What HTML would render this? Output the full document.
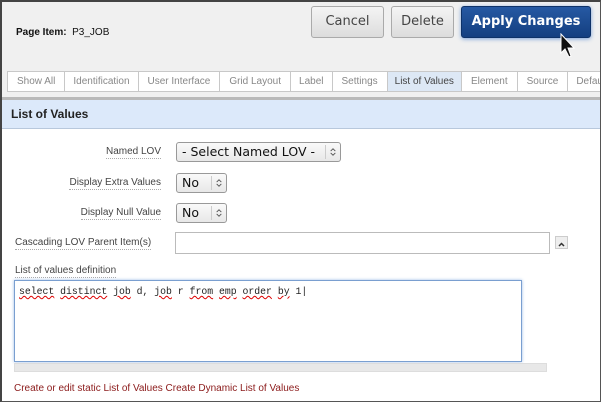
<!DOCTYPE html>
<html><head><style>
*{box-sizing:border-box;margin:0;padding:0}
body{width:602px;height:403px;overflow:hidden;background:#fff;font-family:"Liberation Sans",sans-serif;position:relative}
.frame{position:absolute;left:0;top:0;width:601px;height:402px;border:1px solid #555;border-left:2px solid #444;border-top:2px solid #444}
.hdr{position:absolute;left:2px;top:2px;width:598px;height:96px;background:#f0f0f0}
.title{position:absolute;left:16px;top:27px;font-size:10px;font-weight:bold;color:#111}
.btn{position:absolute;top:6px;height:32px;border:1px solid #aaa;border-radius:3px;background:linear-gradient(#f4f4f4,#dcdcdc);font-family:"DejaVu Sans",sans-serif;font-size:13px;color:#444;text-align:center;line-height:30px}
.apply{background:linear-gradient(#2659a3,#143f80);border-color:#0e3268;color:#fff;font-weight:bold;box-shadow:0 1px 4px #7aa0d8}
.tabwrap{position:absolute;left:7px;top:71px;width:593px;height:21px;overflow:hidden}
.tabs{display:flex;border:1px solid #c8c8c8;background:#fff;width:700px;height:21px}
.tabs div{font-size:10px;color:#888;line-height:19px;padding:0 8px;border-right:1px solid #c8c8c8;white-space:nowrap}
.tabs .on{background:#dde8f5;color:#444}
.sep{position:absolute;left:2px;top:97px;width:598px;height:3px;background:#b9b9b9}
.sec{position:absolute;left:2px;top:100px;width:598px;height:29px;background:#dce9fa;border-bottom:1px solid #b8c8dc;font-size:12px;font-weight:bold;color:#222;padding-left:9px;line-height:28px}
.lbl{position:absolute;font-size:10px;color:#444;border-bottom:1px dotted #aaa;line-height:13px}
.sel{position:absolute;height:20px;border:1px solid #999;border-radius:3px;background:linear-gradient(#fafafa,#e8e8e8);font-family:"DejaVu Sans",sans-serif;font-size:12.5px;color:#111;line-height:18px;padding-left:5px}
.sel svg{position:absolute;right:0;top:2px;border-left:1px solid #ccc}
.inp{position:absolute;left:175px;top:232px;width:375px;height:22px;border:1px solid #bbb;background:#fff}
.up{position:absolute;left:555px;top:236px;width:13px;height:13px;border:1px solid #ccc;background:#eee}
.ta{position:absolute;left:14px;top:280px;width:508px;height:82px;border:1px solid #7a9fd0;box-shadow:0 0 3px #9cbbe6;background:#fff;font-family:"Liberation Mono",monospace;font-size:9.8px;color:#222;padding:5px 4px}
.ta u{text-decoration:underline wavy #d00;text-decoration-thickness:1px}
.grip{position:absolute;left:14px;top:363px;width:533px;height:9px;background:#e8e8e8;border:1px solid #ddd}
.links{position:absolute;left:14px;top:383px;font-size:10px;color:#8b1a1a}
</style></head><body>
<div class="hdr"></div>
<div class="title">Page Item:&nbsp; <span style="font-weight:normal">P3_JOB</span></div>
<div class="btn" style="left:311px;width:73px">Cancel</div>
<div class="btn" style="left:391px;width:63px">Delete</div>
<div class="btn apply" style="left:461px;width:130px">Apply Changes</div>
<svg style="position:absolute;left:560px;top:33px" width="16" height="26" viewBox="0 0 16 26"><path d="M1 1 L1 20 L5 16 L9 24 L11 23 L8 15 L14 15 Z" fill="#111" stroke="#fff" stroke-width="1"/></svg>
<div class="tabwrap"><div class="tabs">
<div style="padding:0 9px">Show All</div><div style="padding:0 8px">Identification</div><div style="padding:0 9px">User Interface</div><div style="padding:0 9px">Grid Layout</div><div style="padding:0 8px">Label</div><div style="padding:0 9px">Settings</div><div class="on" style="padding:0 7px">List of Values</div><div style="padding:0 9px">Element</div><div style="padding:0 9px">Source</div><div style="border:0">Default</div>
</div></div>
<div class="sep"></div>
<div class="sec">List of Values</div>
<div class="lbl" style="right:441px;top:145px">Named LOV</div>
<div class="sel" style="left:176px;top:142px;width:165px">- Select Named LOV -<svg width="15" height="14" viewBox="0 0 15 14"><path d="M5 6 L7.5 3.5 L10 6 M5 8 L7.5 10.5 L10 8" fill="none" stroke="#555" stroke-width="1"/></svg></div>
<div class="lbl" style="right:441px;top:176px">Display Extra Values</div>
<div class="sel" style="left:176px;top:173px;width:51px">No<svg width="15" height="14" viewBox="0 0 15 14"><path d="M5 6 L7.5 3.5 L10 6 M5 8 L7.5 10.5 L10 8" fill="none" stroke="#555" stroke-width="1"/></svg></div>
<div class="lbl" style="right:441px;top:206px">Display Null Value</div>
<div class="sel" style="left:176px;top:203px;width:51px">No<svg width="15" height="14" viewBox="0 0 15 14"><path d="M5 6 L7.5 3.5 L10 6 M5 8 L7.5 10.5 L10 8" fill="none" stroke="#555" stroke-width="1"/></svg></div>
<div class="lbl" style="left:15px;top:236px">Cascading LOV Parent Item(s)</div>
<div class="inp"></div>
<div class="up"><svg width="11" height="11" viewBox="0 0 11 11"><path d="M3 7 L5.5 4.5 L8 7" fill="none" stroke="#333" stroke-width="1.5"/></svg></div>
<div class="lbl" style="left:15px;top:264px">List of values definition</div>
<div class="ta"><u>select</u> <u>distinct</u> <u>job</u> d, <u>job</u> r <u>from</u> <u>emp</u> <u>order</u> <u>by</u> 1|</div>
<div class="grip"></div>
<div class="links">Create or edit static List of Values Create Dynamic List of Values</div>
<div class="frame"></div>
</body></html>
